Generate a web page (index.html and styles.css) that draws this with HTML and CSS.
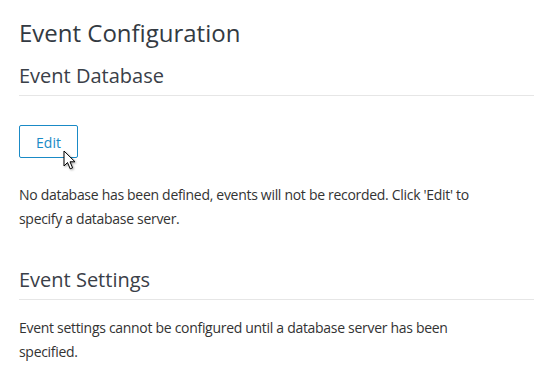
FILE: index.html
```html
<!DOCTYPE html>
<html lang="en">
<head>
    <meta charset="UTF-8">
    <title>Event Configuration</title>
    <link rel="stylesheet" href="styles.css">
</head>
<body>
    <div class="page">
        <h1 class="page-title">Event Configuration</h1>

        <div class="section">
            <h2 class="section-title">Event Database</h2>
            <div class="actions">
                <button class="btn">Edit</button>
                <svg class="cursor" width="14" height="22" viewBox="0 0 14 22">
                    <path d="M1 1 L1 16 L4.5 12.5 L7.2 18.8 L9.6 17.8 L7 11.8 L12 11.8 Z" fill="#fff" stroke="#000" stroke-width="1" stroke-linejoin="round"/>
                </svg>
            </div>
            <p class="note">No database has been defined, events will not be recorded. Click 'Edit' to specify a database server.</p>
        </div>

        <div class="section">
            <h2 class="section-title">Event Settings</h2>
            <p class="note">Event settings cannot be configured until a database server has been specified.</p>
        </div>
    </div>
</body>
</html>
```

FILE: styles.css
```css
* {
    margin: 0;
    padding: 0;
    box-sizing: border-box;
}

body {
    font-family: 'Open Sans', 'Segoe UI', sans-serif;
    background: #fff;
    color: #333;
}

.page {
    padding: 17px 14px 0 19px;
}

.page-title {
    font-size: 24px;
    font-weight: 400;
    line-height: 32px;
    color: #333a42;
}

.section-title {
    font-size: 20px;
    font-weight: 400;
    line-height: 28px;
    color: #3a4048;
    padding-bottom: 5px;
    border-bottom: 1px solid #e6e6e6;
    margin-top: 13px;
}

.actions {
    position: relative;
    display: flex;
    margin-top: 29px;
}

.btn {
    font-family: inherit;
    font-size: 14px;
    color: #1a8ac6;
    background: #fff;
    border: 1px solid #1a8ac6;
    border-radius: 2px;
    width: 59px;
    height: 33px;
    padding-top: 1px;
    cursor: pointer;
}

.cursor {
    position: absolute;
    left: 44px;
    top: 25px;
    filter: drop-shadow(1px 1px 1px rgba(0,0,0,0.35));
}

.note {
    font-size: 14px;
    line-height: 24px;
    letter-spacing: -0.3px;
    color: #333;
    max-width: 480px;
    margin-top: 25px;
}

.section + .section .section-title {
    margin-top: 35px;
}

.section + .section .note {
    margin-top: 16px;
}
```
